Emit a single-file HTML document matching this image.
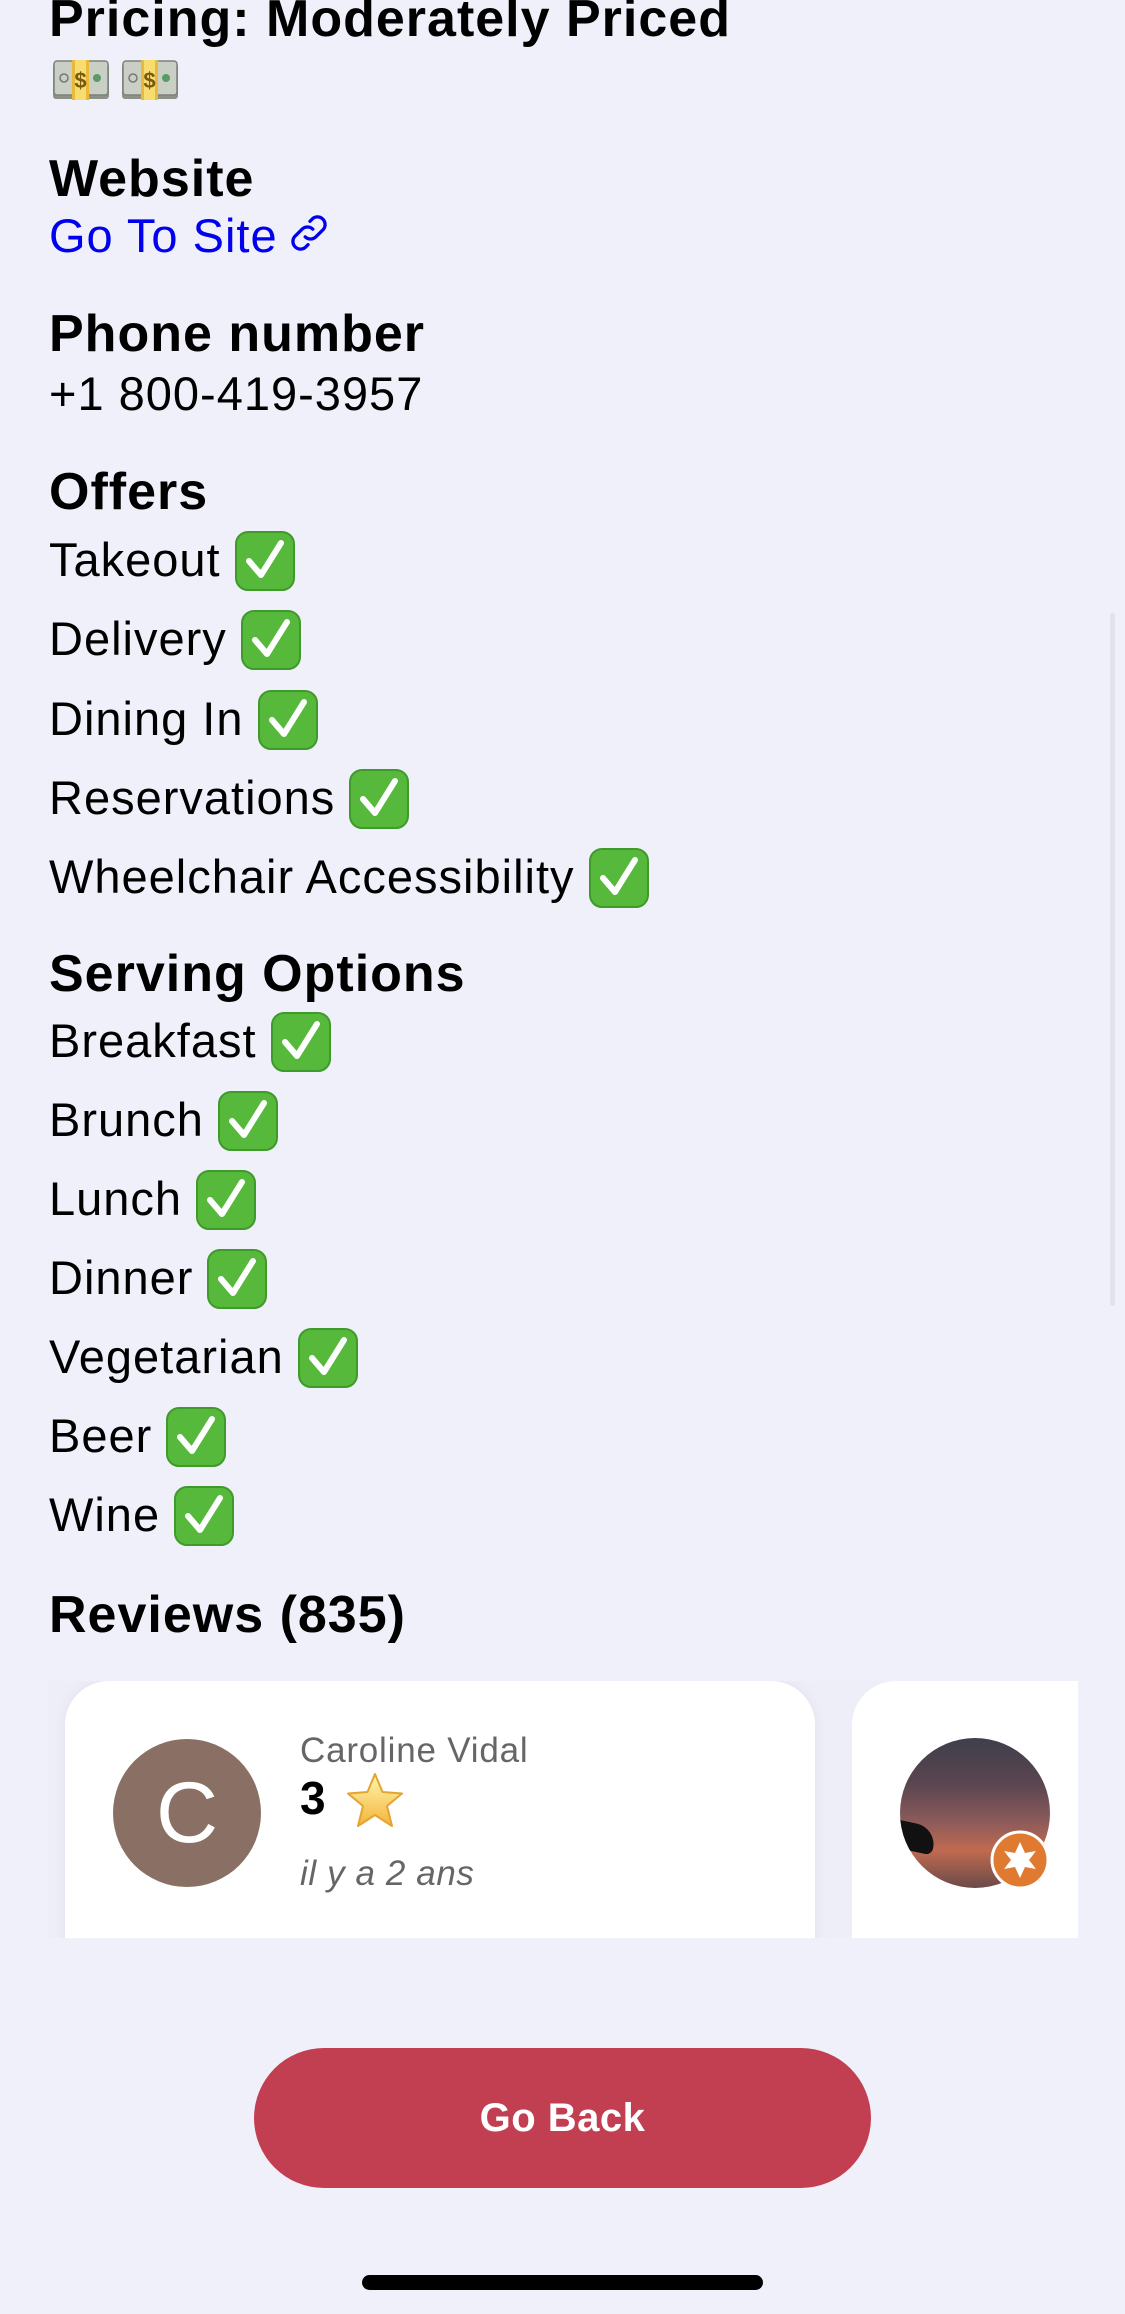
<!DOCTYPE html>
<html><head><meta charset="utf-8">
<style>
html,body{margin:0;padding:0}
body{width:1125px;height:2314px;background:#f0f0fa;position:relative;overflow:hidden;font-family:"Liberation Sans",sans-serif;color:#000}
.h{position:absolute;left:49px;font-size:52px;line-height:62px;font-weight:bold;white-space:nowrap;letter-spacing:1px}
.b{position:absolute;left:49px;font-size:47px;line-height:56px;white-space:nowrap;letter-spacing:1px}
.b svg{display:inline-block;vertical-align:top;margin-left:14px;margin-top:-1px}
</style></head><body>
<svg width="0" height="0" style="position:absolute">
<defs>
<symbol id="ck" viewBox="0 0 60 60"><rect x="1" y="1" width="58" height="58" rx="12" fill="#56b93c"/><rect x="1" y="1" width="58" height="58" rx="12" fill="none" stroke="#3f9a2a" stroke-width="2"/><path d="M14 30 L26 44 L46 12" fill="none" stroke="#fff" stroke-width="6" stroke-linecap="round" stroke-linejoin="round"/></symbol>
<symbol id="bill" viewBox="0 0 58 40"><rect x="1" y="3" width="56" height="36" rx="3" fill="#8c9288"/><rect x="2" y="1" width="54" height="34" rx="3" fill="#c9cfc4" stroke="#7c8278" stroke-width="1.5"/><circle cx="12" cy="18" r="4" fill="none" stroke="#777" stroke-width="1.5"/><circle cx="45" cy="18" r="4" fill="#5a9a66"/><rect x="20" y="0" width="17" height="40" fill="#f7dc6f"/><rect x="20" y="0" width="3" height="40" fill="#e9b93a"/><rect x="34" y="0" width="3" height="40" fill="#e9b93a"/><text x="28.5" y="28" font-size="22" font-weight="bold" text-anchor="middle" fill="#7a5a10" font-family="Liberation Sans">$</text></symbol>
</defs></svg>

<div class="h" style="top:-12px">Pricing: Moderately Priced</div>
<svg style="position:absolute;left:52px;top:60px" width="58" height="40"><use href="#bill"/></svg>
<svg style="position:absolute;left:121px;top:60px" width="58" height="40"><use href="#bill"/></svg>

<div class="h" style="top:148px">Website</div>
<div class="b" style="top:208px;color:#0000ee">Go To Site<svg width="46" height="46" viewBox="0 0 24 24" style="margin-left:8px;margin-top:2px"><g fill="none" stroke="#0000ee" stroke-width="1.7" stroke-linecap="round"><path d="M10 14a4 4 0 0 0 5.6 0l4-4a4 4 0 0 0-5.6-5.6l-1.5 1.5"/><path d="M14 10a4 4 0 0 0-5.6 0l-4 4a4 4 0 0 0 5.6 5.6l1.5-1.5"/></g></svg></div>

<div class="h" style="top:303px">Phone number</div>
<div class="b" style="top:366px">+1 800-419-3957</div>

<div class="h" style="top:461px">Offers</div>
<div class="b" style="top:532px">Takeout<svg width="60" height="60"><use href="#ck"/></svg></div>
<div class="b" style="top:611px">Delivery<svg width="60" height="60"><use href="#ck"/></svg></div>
<div class="b" style="top:691px">Dining In<svg width="60" height="60"><use href="#ck"/></svg></div>
<div class="b" style="top:770px">Reservations<svg width="60" height="60"><use href="#ck"/></svg></div>
<div class="b" style="top:849px">Wheelchair Accessibility<svg width="60" height="60"><use href="#ck"/></svg></div>

<div class="h" style="top:943px">Serving Options</div>
<div class="b" style="top:1013px">Breakfast<svg width="60" height="60"><use href="#ck"/></svg></div>
<div class="b" style="top:1092px">Brunch<svg width="60" height="60"><use href="#ck"/></svg></div>
<div class="b" style="top:1171px">Lunch<svg width="60" height="60"><use href="#ck"/></svg></div>
<div class="b" style="top:1250px">Dinner<svg width="60" height="60"><use href="#ck"/></svg></div>
<div class="b" style="top:1329px">Vegetarian<svg width="60" height="60"><use href="#ck"/></svg></div>
<div class="b" style="top:1408px">Beer<svg width="60" height="60"><use href="#ck"/></svg></div>
<div class="b" style="top:1487px">Wine<svg width="60" height="60"><use href="#ck"/></svg></div>

<div class="h" style="top:1584px">Reviews (835)</div>

<div style="position:absolute;left:48px;top:1681px;width:1030px;height:257px;overflow:hidden;background:#eeeef8">
  <div style="position:absolute;left:17px;top:0;width:750px;height:320px;background:#fff;border-radius:44px;box-shadow:0 0 14px rgba(0,0,0,0.05)"></div>
  <div style="position:absolute;left:804px;top:0;width:300px;height:320px;background:#fff;border-radius:44px"></div>
  <div style="position:absolute;left:65px;top:58px;width:148px;height:148px;border-radius:50%;background:#8a7064;color:#fff;font-size:86px;line-height:148px;text-align:center">C</div>
  <div style="position:absolute;left:252px;top:49px;font-size:35px;line-height:42px;color:#666;white-space:nowrap;letter-spacing:0.8px">Caroline Vidal</div>
  <div style="position:absolute;left:252px;top:90px;font-size:46px;line-height:54px;font-weight:bold;white-space:nowrap">3</div>
  <svg style="position:absolute;left:297px;top:91px" width="60" height="57" viewBox="0 0 60 57"><defs><linearGradient id="sg" x1="0" y1="0" x2="0" y2="1"><stop offset="0" stop-color="#fff6b0"/><stop offset="1" stop-color="#f3b53a"/></linearGradient></defs><path d="M30 2 L37.5 20 L57 21.5 L42 34 L47 54 L30 43 L13 54 L18 34 L3 21.5 L22.5 20 Z" fill="url(#sg)" stroke="#e4a431" stroke-width="2" stroke-linejoin="round"/></svg>
  <div style="position:absolute;left:252px;top:172px;font-size:35px;line-height:42px;color:#666;font-style:italic;white-space:nowrap;letter-spacing:0.6px">il y a 2 ans</div>
  <div style="position:absolute;left:852px;top:57px;width:150px;height:150px;border-radius:50%;overflow:hidden;background:linear-gradient(180deg,#3f3f4c 0%,#5a4550 30%,#8a5a5a 55%,#c06a50 75%,#6a4a48 100%)">
    <div style="position:absolute;left:-10px;top:85px;width:45px;height:28px;background:#111;border-radius:0 30px 10px 0;transform:rotate(12deg)"></div>
  </div>
  <svg style="position:absolute;left:942px;top:149px" width="60" height="60" viewBox="0 0 60 60"><circle cx="30" cy="30" r="28" fill="#e07a30" stroke="#fff" stroke-width="3"/><path d="M30 12 L35 23 L46 21 L39 30 L46 39 L35 37 L30 48 L25 37 L14 39 L21 30 L14 21 L25 23 Z" fill="#fff"/></svg>
</div>

<div style="position:absolute;left:1110px;top:613px;width:5px;height:693px;border-radius:3px;background:#e2e2ea"></div>

<div style="position:absolute;left:254px;top:2048px;width:617px;height:140px;border-radius:70px;background:#c23e51;color:#fff;font-size:40px;font-weight:bold;line-height:140px;text-align:center;letter-spacing:0.5px">Go Back</div>

<div style="position:absolute;left:362px;top:2275px;width:401px;height:15px;border-radius:8px;background:#000"></div>
</body></html>
